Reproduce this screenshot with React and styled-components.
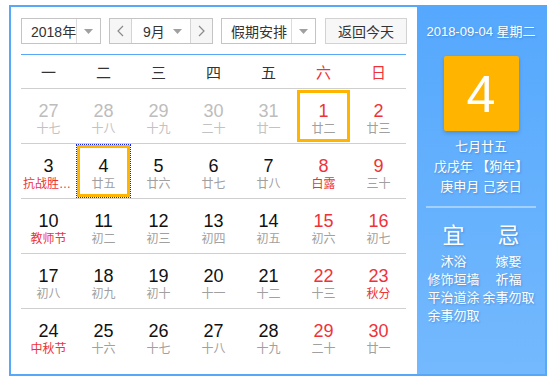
import styled, { createGlobalStyle } from "styled-components";

const GlobalStyle = createGlobalStyle`
  body {
    margin: 0;
    padding: 5px 0 0 9px;
    background: #fff;
    font-family: "Liberation Sans", "Noto Sans CJK SC", sans-serif;
  }
`;

const weeks = [
  [
    { d: 27, l: "十七", out: true },
    { d: 28, l: "十八", out: true },
    { d: 29, l: "十九", out: true },
    { d: 30, l: "二十", out: true },
    { d: 31, l: "廿一", out: true },
    { d: 1, l: "廿二", mark: true },
    { d: 2, l: "廿三" },
  ],
  [
    { d: 3, l: "抗战胜利纪念日", fest: true },
    { d: 4, l: "廿五", mark: true, today: true },
    { d: 5, l: "廿六" },
    { d: 6, l: "廿七" },
    { d: 7, l: "廿八" },
    { d: 8, l: "白露", fest: true },
    { d: 9, l: "三十" },
  ],
  [
    { d: 10, l: "教师节", fest: true },
    { d: 11, l: "初二" },
    { d: 12, l: "初三" },
    { d: 13, l: "初四" },
    { d: 14, l: "初五" },
    { d: 15, l: "初六" },
    { d: 16, l: "初七" },
  ],
  [
    { d: 17, l: "初八" },
    { d: 18, l: "初九" },
    { d: 19, l: "初十" },
    { d: 20, l: "十一" },
    { d: 21, l: "十二" },
    { d: 22, l: "十三" },
    { d: 23, l: "秋分", fest: true },
  ],
  [
    { d: 24, l: "中秋节", fest: true },
    { d: 25, l: "十六" },
    { d: 26, l: "十七" },
    { d: 27, l: "十八" },
    { d: 28, l: "十九" },
    { d: 29, l: "二十" },
    { d: 30, l: "廿一" },
  ],
];

const weekdays = ["一", "二", "三", "四", "五", "六", "日"];

const RED = "#ee3338";

const Arrow = () => (
  <svg width="9" height="5" viewBox="0 0 9 5">
    <path d="M0 0 L9 0 L4.5 5 Z" fill="#a0a0a0" />
  </svg>
);

const Chevron = ({ right }) => (
  <svg width="7" height="12" viewBox="0 0 7 12">
    <polyline
      points={right ? "1,1 6,6 1,11" : "6,1 1,6 6,11"}
      fill="none"
      stroke="#8a8a8a"
      strokeWidth="1.2"
    />
  </svg>
);

const App = () => {
  return (
    <>
      <GlobalStyle />
      <Widget>
        <Main>
          <Toolbar>
            <Select width={80}>
              <SelectText>2018年</SelectText>
              <ArrowBox>
                <Arrow />
              </ArrowBox>
            </Select>
            <MonthGroup>
              <StepButton>
                <Chevron />
              </StepButton>
              <MonthBox>
                <span>9月</span>
                <Arrow />
              </MonthBox>
              <StepButton right>
                <Chevron right />
              </StepButton>
            </MonthGroup>
            <Select width={95}>
              <SelectText>假期安排</SelectText>
              <ArrowBox>
                <Arrow />
              </ArrowBox>
            </Select>
            <TodayButton>返回今天</TodayButton>
          </Toolbar>
          <WeekHeader>
            {weekdays.map((w, i) => (
              <WeekDay key={w} weekend={i > 4}>
                {w}
              </WeekDay>
            ))}
          </WeekHeader>
          {weeks.map((row, r) => (
            <Row key={r} last={r === weeks.length - 1}>
              {row.map((c, i) => (
                <Cell key={i} mark={c.mark} today={c.today}>
                  <DayNum out={c.out} weekend={i > 4 && !c.out}>
                    {c.d}
                  </DayNum>
                  <Lunar out={c.out} fest={c.fest}>
                    {c.l}
                  </Lunar>
                </Cell>
              ))}
            </Row>
          ))}
        </Main>
        <Side>
          <DateLine>2018-09-04 星期二</DateLine>
          <BigDay>4</BigDay>
          <LunarInfo>
            <div>七月廿五</div>
            <div>戊戌年 【狗年】</div>
            <div>庚申月 己亥日</div>
          </LunarInfo>
          <Divider />
          <Advice>
            <AdviceCol>
              <AdviceTitle>宜</AdviceTitle>
              <AdviceItem>沐浴</AdviceItem>
              <AdviceItem>修饰垣墙</AdviceItem>
              <AdviceItem>平治道涂</AdviceItem>
              <AdviceItem>余事勿取</AdviceItem>
            </AdviceCol>
            <AdviceCol>
              <AdviceTitle>忌</AdviceTitle>
              <AdviceItem>嫁娶</AdviceItem>
              <AdviceItem>祈福</AdviceItem>
              <AdviceItem>余事勿取</AdviceItem>
            </AdviceCol>
          </Advice>
        </Side>
      </Widget>
    </>
  );
};

const Widget = styled.div`
  box-sizing: border-box;
  width: 538px;
  height: 371px;
  border: 2px solid #58a8f8;
  display: flex;
  background: #fff;
`;

const Main = styled.div`
  width: 406px;
  flex-shrink: 0;
  padding: 11px 11px 0 10px;
  box-sizing: border-box;
`;

const Toolbar = styled.div`
  display: flex;
  height: 26px;
  gap: 7px;
  padding-bottom: 10px;
  border-bottom: 1px solid #58a8f8;
`;

const Select = styled.div`
  box-sizing: border-box;
  flex-shrink: 0;
  width: ${(p) => p.width}px;
  height: 26px;
  border: 1px solid #c4c4c4;
  display: flex;
  font-size: 14px;
  color: #333;
`;

const SelectText = styled.div`
  flex: 1;
  display: flex;
  align-items: center;
  padding-left: 9px;
  white-space: nowrap;
`;

const ArrowBox = styled.div`
  width: 23px;
  flex-shrink: 0;
  border-left: 1px solid #dcdcdc;
  display: flex;
  align-items: center;
  justify-content: center;
`;

const MonthGroup = styled.div`
  box-sizing: border-box;
  flex-shrink: 0;
  width: 104px;
  height: 26px;
  border: 1px solid #c4c4c4;
  display: flex;
  margin-left: 1px;
  margin-right: 1px;
`;

const StepButton = styled.div`
  width: 21px;
  background: #f6f6f6;
  display: flex;
  align-items: center;
  justify-content: center;
  border-${(p) => (p.right ? "left" : "right")}: 1px solid #d4d4d4;
`;

const MonthBox = styled.div`
  flex: 1;
  display: flex;
  align-items: center;
  justify-content: space-between;
  padding: 0 8px 0 11px;
  font-size: 14px;
  color: #333;
  white-space: nowrap;
`;

const TodayButton = styled.div`
  box-sizing: border-box;
  flex-shrink: 0;
  width: 82px;
  height: 26px;
  margin-left: 2px;
  border: 1px solid #d2d2d2;
  background: #f7f7f7;
  font-size: 14px;
  color: #333;
  white-space: nowrap;
  display: flex;
  align-items: center;
  justify-content: center;
`;

const WeekHeader = styled.div`
  display: grid;
  grid-template-columns: repeat(7, 55px);
  height: 33px;
  border-bottom: 1px solid #cfcfcf;
`;

const WeekDay = styled.div`
  display: flex;
  align-items: center;
  justify-content: center;
  font-size: 15px;
  color: ${(p) => (p.weekend ? RED : "#333")};
`;

const Row = styled.div`
  display: grid;
  grid-template-columns: repeat(7, 55px);
  height: 55px;
  box-sizing: border-box;
  border-bottom: ${(p) => (p.last ? "none" : "1px solid #cfcfcf")};
`;

const Cell = styled.div`
  display: flex;
  flex-direction: column;
  align-items: center;
  padding-top: 12px;
  box-sizing: border-box;
  overflow: hidden;
  box-shadow: ${(p) =>
    p.mark ? "inset 0 0 0 1px #fff, inset 0 0 0 4px #ffb400" : "none"};
  outline: ${(p) => (p.today ? "1px dotted #1020e0" : "none")};
  outline-offset: -1px;
`;

const DayNum = styled.div`
  font-size: 18px;
  line-height: 20px;
  color: ${(p) => (p.out ? "#bdbdbd" : p.weekend ? RED : "#111")};
`;

const Lunar = styled.div`
  font-size: 12px;
  line-height: 16px;
  max-width: 51px;
  white-space: nowrap;
  overflow: hidden;
  text-overflow: ellipsis;
  color: ${(p) => (p.fest ? RED : p.out ? "#c2c2c2" : "#a0a0a0")};
`;

const Side = styled.div`
  flex: 1;
  background: linear-gradient(#55a8fd, #74b9fd);
  display: flex;
  flex-direction: column;
  align-items: center;
  padding-top: 15px;
  color: #fff;
  text-shadow: 1px 1px 2px rgba(0, 40, 100, 0.25);
`;

const DateLine = styled.div`
  font-size: 13px;
  line-height: 20px;
  white-space: nowrap;
`;

const BigDay = styled.div`
  margin-top: 14px;
  width: 75px;
  height: 75px;
  border-radius: 2px;
  background: #ffb400;
  box-shadow: 0 2px 4px rgba(0, 0, 0, 0.18);
  display: flex;
  align-items: center;
  justify-content: center;
  font-size: 52px;
  text-shadow: none;
`;

const LunarInfo = styled.div`
  margin-top: 6px;
  font-size: 13px;
  line-height: 20px;
  text-align: center;
  white-space: nowrap;
`;

const Divider = styled.div`
  margin-top: 9px;
  width: 110px;
  height: 2px;
  background: rgba(255, 255, 255, 0.4);
`;

const Advice = styled.div`
  display: flex;
  gap: 3px;
  margin-top: 15px;
`;

const AdviceCol = styled.div`
  width: 52px;
  display: flex;
  flex-direction: column;
  align-items: center;
`;

const AdviceTitle = styled.div`
  font-size: 22px;
  line-height: 26px;
  margin-bottom: 4px;
`;

const AdviceItem = styled.div`
  font-size: 13px;
  line-height: 18px;
  white-space: nowrap;
`;

export default App;
